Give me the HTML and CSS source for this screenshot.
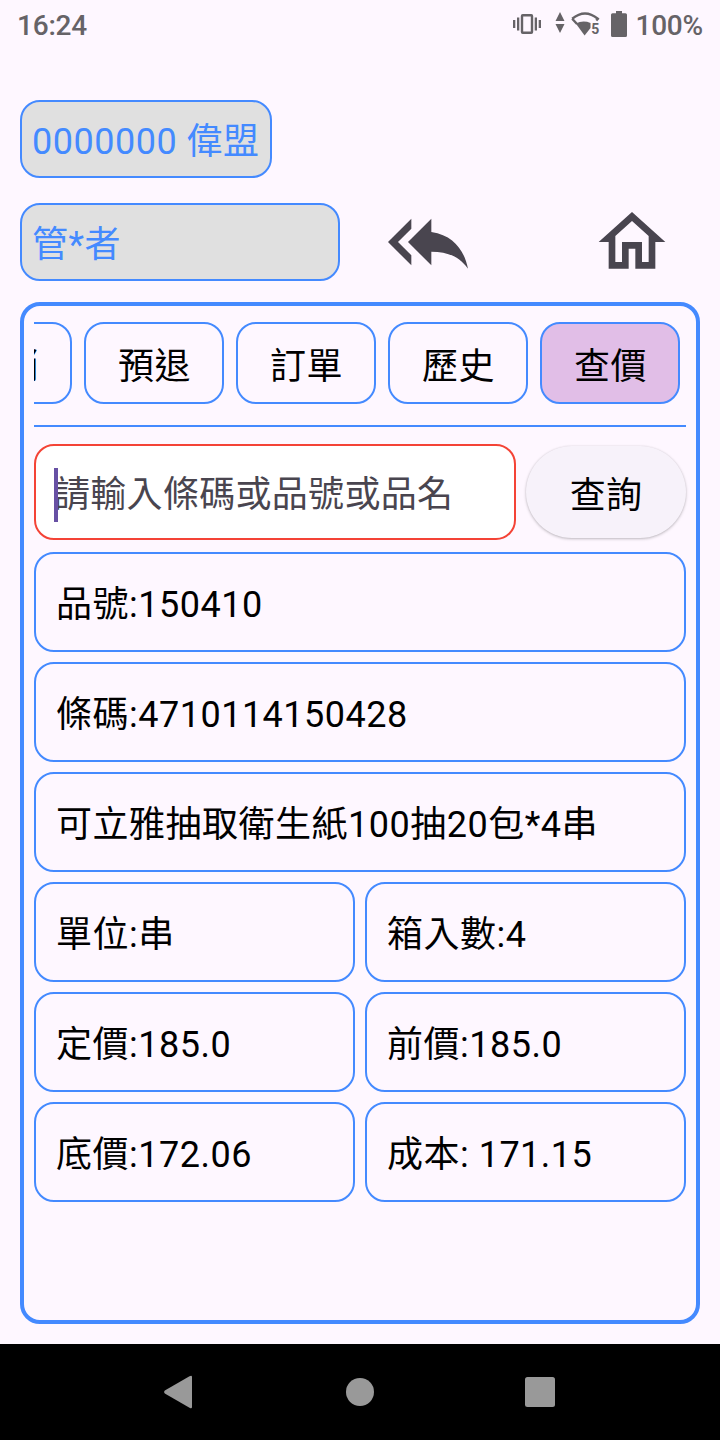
FILE: index.html
```html
<!DOCTYPE html>
<html lang="zh-Hant">
<head>
	<meta charset="UTF-8">
	<title>查價</title>
	<link rel="stylesheet" href="styles.css">
</head>
<body>
	<div class="status">
		<span class="time">16:24</span>
		<svg class="vibrate" width="28" height="20" viewBox="0 0 28 20">
			<path d="M0 6h2.300v8H0zM4 3.500h2.300v13H4zM21.700 3.500H24v13h-2.300zM25.700 6H28v8h-2.300z"/>
			<path class="hollow" d="M9.700 1.200h8.600q.7 0 .7.700v16.200q0 .7-.7.700H9.700q-.7 0-.7-.7V1.900q0-.7.700-.7z"/>
		</svg>
		<svg class="updown" width="10" height="22" viewBox="0 0 10 22">
			<path d="M5 0l4.500 9h-9zM5 21l4.500-9h-9z"/>
		</svg>
		<svg class="wifi" width="29" height="24" viewBox="0 0 29 24">
			<path class="hollow" d="M1.200 6.800Q14 -3.700 26.800 6.800L25.300 8.500M1.200 6.800L6 12"/>
			<path d="M4.800 11.500Q12 8 19.500 11V16L13.600 23.500z"/>
			<text x="20.300" y="21.500">5</text>
		</svg>
		<svg class="battery" width="16" height="26" viewBox="0 0 16 26">
			<path d="M5 0h6v2.300h3.500q1.500 0 1.500 1.500v20.700q0 1.500-1.500 1.500h-13Q0 26 0 24.500V3.800q0-1.500 1.500-1.500H5z"/>
		</svg>
		<span>100%</span>
	</div>

	<div class="main">
		<div class="chip">0000000 偉盟</div>
		<div class="user">
			<div class="chip user-name">管*者</div>
			<svg class="icon back" viewBox="0 0 24 24"><path d="M7 8V5l-7 7 7 7v-3l-4-4 4-4zm6 1V5l-7 7 7 7v-4.100c5 0 8.500 1.600 11 5.100-1-5-4-10-11-11z"/></svg>
			<svg class="icon" viewBox="0 0 24 24"><path d="M12 5.690l5 4.500V18h-2v-6H9v6H7v-7.810l5-4.500M12 3L2 12h3v8h6v-6h2v6h6v-8h3L12 3z"/></svg>
		</div>

		<div class="panel">
			<ul class="tabs">
				<li>預銷</li>
				<li>預退</li>
				<li>訂單</li>
				<li>歷史</li>
				<li class="active">查價</li>
			</ul>
			<div class="search">
				<div class="input"><span class="cursor"></span>請輸入條碼或品號或品名</div>
				<div class="btn">查詢</div>
			</div>
			<div class="info">
				<div class="cell wide">品號:150410</div>
				<div class="cell wide">條碼:4710114150428</div>
				<div class="cell wide">可立雅抽取衛生紙100抽20包*4串</div>
				<div class="cell">單位:串</div>
				<div class="cell">箱入數:4</div>
				<div class="cell">定價:185.0</div>
				<div class="cell">前價:185.0</div>
				<div class="cell">底價:172.06</div>
				<div class="cell">成本: 171.15</div>
			</div>
		</div>
	</div>

	<div class="nav">
		<svg viewBox="0 0 48 48"><path d="M33.500 8.300Q36 7 36 9v30q0 2-2.500.7L8.800 25.500q-1.600-1.500 0-3z"/></svg>
		<svg viewBox="0 0 48 48"><circle cx="24" cy="24" r="14"/></svg>
		<svg viewBox="0 0 48 48"><rect x="9" y="9" width="30" height="30" rx="2.500"/></svg>
	</div>
</body>
</html>
```
FILE: styles.css
```css
* {
	box-sizing: border-box;
}
body {
	margin: 0;
	height: 1440px;
	display: flex;
	flex-direction: column;
	overflow: hidden;
	background: #fef7ff;
	color: #000;
	font-family: Roboto, "Noto Sans CJK TC", sans-serif;
	font-size: 36px;
	line-height: 54px;
	letter-spacing: 0.5px;
	white-space: nowrap;
}
svg {
	display: block;
	flex: none;
}

/* status bar */
.status {
	height: 48px;
	padding: 3px 17px 0 17px;
	display: flex;
	align-items: center;
	font-size: 28px;
	line-height: 44px;
	font-weight: 500;
	letter-spacing: -0.2px;
	color: #666367;
	fill: #666367;
}
.status .hollow {
	fill: none;
	stroke: #666367;
	stroke-width: 2.4;
}
.status text {
	font-size: 14px;
	font-weight: 700;
}
.time {
	margin-right: auto;
}
.vibrate {
	margin: -3px 14px 0 0;
}
.updown {
	margin: -6px 6px 0 0;
}
.wifi {
	margin: -4px 11px 0 0;
}
.battery {
	margin: -4px 8px 0 0;
}

.main {
	flex: 1;
	padding: 52px 20px 20px;
	display: flex;
	flex-direction: column;
}
.chip {
	align-self: flex-start;
	height: 78px;
	padding: 13px 10px;
	border: 2px solid #448aff;
	border-radius: 20px;
	background: #e0e0e0;
	color: #448aff;
}
.user {
	margin: 24px 0 20px;
	height: 80px;
	display: flex;
	align-items: center;
}
.user-name {
	align-self: center;
	width: 320px;
}
.icon {
	width: 80px;
	height: 80px;
	fill: #49454f;
}
.back {
	margin: 0 124px 0 48px;
}

.panel {
	flex: 1;
	padding: 16px 10px 0;
	border: 4px solid #448aff;
	border-radius: 20px;
}
.tabs {
	list-style: none;
	margin: 0 0 17px;
	padding: 0 6px 21px 0;
	display: flex;
	justify-content: flex-end;
	gap: 12px;
	overflow: hidden;
	border-bottom: 2px solid #448aff;
}
.tabs li {
	flex: none;
	width: 140px;
	height: 82px;
	padding: 16px 0 0 1px;
	border: 2px solid #448aff;
	border-radius: 20px;
	text-align: center;
}
.tabs .active {
	background: #e1bee7;
}

.search {
	display: flex;
	align-items: center;
	gap: 10px;
	margin-bottom: 12px;
}
.input {
	position: relative;
	flex: 1;
	height: 96px;
	padding: 22px 0 0 18px;
	border: 2px solid #f44336;
	border-radius: 20px;
	background: #fff;
	color: #49454f;
	letter-spacing: 0.3px;
}
.cursor {
	position: absolute;
	left: 18px;
	top: 22px;
	width: 4px;
	height: 54px;
	background: #6750a4;
}
.btn {
	width: 160px;
	height: 92px;
	padding-top: 23px;
	border-radius: 46px;
	background: #f7f2fa;
	box-shadow: 0 1px 3px rgba(0, 0, 0, 0.25), 0 0 2px rgba(0, 0, 0, 0.06);
	text-align: center;
	letter-spacing: 0.2px;
}

.info {
	display: grid;
	grid-template-columns: 1fr 1fr;
	gap: 10px;
}
.cell {
	height: 100px;
	padding: 24px 20px;
	border: 2px solid #448aff;
	border-radius: 20px;
}
.wide {
	grid-column: 1 / 3;
}

/* android buttons */
.nav {
	height: 96px;
	padding: 0 156px;
	display: flex;
	align-items: center;
	justify-content: space-between;
	background: #000;
	fill: #999;
}
.nav svg {
	width: 48px;
	height: 48px;
}
```
